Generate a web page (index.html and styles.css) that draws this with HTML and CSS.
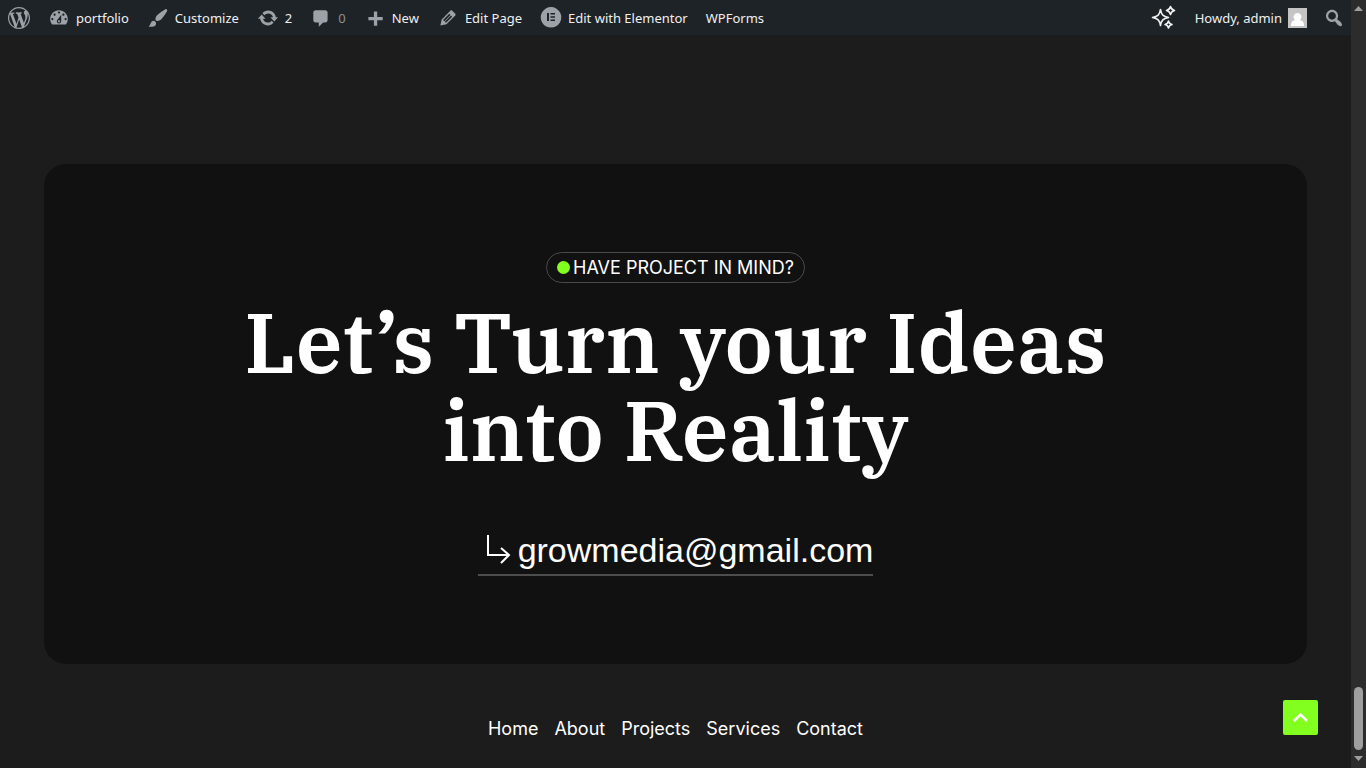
FILE: index.html
```html
<!DOCTYPE html>
<html lang="en">
<head>
  <meta charset="UTF-8">
  <meta name="viewport" content="width=device-width, initial-scale=1.0">
  <title>portfolio</title>
  <link rel="stylesheet" href="styles.css">
</head>
<body>

<div class="page">
  <header class="admin-bar">
    <nav class="bar-group" aria-label="Toolbar">
      <a class="bar-item" href="#" aria-label="About WordPress">
        <svg class="icon" viewBox="0 0 20 20"><path d="M20 10c0-5.51-4.49-10-10-10C4.48 0 0 4.49 0 10c0 5.52 4.48 10 10 10 5.51 0 10-4.48 10-10zM7.78 15.37L4.37 6.22c.55-.02 1.17-.08 1.17-.08.5-.06.44-1.13-.06-1.11 0 0-1.45.11-2.37.11-.18 0-.37 0-.58-.01C4.12 2.69 6.87 1.11 10 1.11c2.33 0 4.45.87 6.05 2.34-.68-.11-1.65.39-1.65 1.58 0 .74.45 1.36.9 2.1.35.61.55 1.36.55 2.46 0 1.49-1.4 5-1.4 5l-3.03-8.37c.54-.02.82-.17.82-.17.5-.05.44-1.25-.06-1.22 0 0-1.44.12-2.38.12-.87 0-2.33-.12-2.33-.12-.5-.03-.56 1.2-.06 1.22l.92.08 1.26 3.41zM17.41 10c.24-.64.74-1.87.43-4.25.7 1.29 1.05 2.71 1.05 4.25 0 3.29-1.73 6.24-4.4 7.78.97-2.59 1.94-5.2 2.92-7.78zM6.1 18.09C3.12 16.65 1.11 13.53 1.11 10c0-1.3.23-2.48.72-3.59C3.25 10.3 4.67 14.2 6.1 18.09zm4.03-6.63l2.58 6.98c-.86.29-1.76.45-2.71.45-.79 0-1.57-.11-2.29-.33.81-2.38 1.62-4.74 2.42-7.1z"/></svg>
      </a>
      <a class="bar-item" href="#">
        <svg class="icon" viewBox="0 0 20 20"><path fill-rule="evenodd" d="M3.76 16h12.48c1.1-1.37 1.76-3.11 1.76-5 0-4.42-3.58-8-8-8s-8 3.58-8 8c0 1.89.66 3.63 1.76 5zM10 4c.55 0 1 .45 1 1s-.45 1-1 1-1-.45-1-1 .45-1 1-1zM6 6c.55 0 1 .45 1 1s-.45 1-1 1-1-.45-1-1 .45-1 1-1zm8 0c.55 0 1 .45 1 1s-.45 1-1 1-1-.45-1-1 .45-1 1-1zm-5.37 5.55L12 7v6c0 1.1-.9 2-2 2s-2-.9-2-2c0-.57.24-1.08.63-1.45zM4 10c.55 0 1 .45 1 1s-.45 1-1 1-1-.45-1-1 .45-1 1-1zm12 0c.55 0 1 .45 1 1s-.45 1-1 1-1-.45-1-1 .45-1 1-1zm-5 3c0-.55-.45-1-1-1s-1 .45-1 1 .45 1 1 1 1-.45 1-1z"/></svg>
        <span>portfolio</span>
      </a>
      <a class="bar-item" href="#">
        <svg class="icon" viewBox="0 0 20 20"><path d="M18.33 3.57s.27-.8-.31-1.36c-.53-.52-1.22-.24-1.22-.24-.61.3-5.76 3.47-7.67 5.57-.86.96-2.06 3.79-1.09 4.82.92.98 3.96-.17 4.79-1 2.06-2.06 5.21-7.17 5.5-7.79zM1.4 17.65c2.37-1.56 1.46-3.41 3.23-4.64.93-.65 2.22-.62 3.08.29.63.67.8 2.57-.16 3.46-1.57 1.45-4 1.55-6.15.89z"/></svg>
        <span>Customize</span>
      </a>
      <a class="bar-item" href="#">
        <svg class="icon" viewBox="0 0 20 20"><path d="M10.2 3.28c3.53 0 6.43 2.61 6.92 6h2.08l-3.5 4-3.5-4h2.32c-.45-1.97-2.21-3.45-4.32-3.45-1.45 0-2.73.71-3.54 1.78L4.95 5.66C6.23 4.2 8.11 3.28 10.2 3.28zm-.4 13.44c-3.52 0-6.43-2.61-6.92-6H.8l3.5-4c1.17 1.33 2.33 2.67 3.5 4H5.48c.45 1.97 2.21 3.45 4.32 3.45 1.45 0 2.73-.71 3.54-1.78l1.71 1.95c-1.28 1.46-3.15 2.38-5.25 2.38z"/></svg>
        <span>2</span>
      </a>
      <a class="bar-item muted" href="#">
        <svg class="icon" viewBox="0 0 20 20"><path d="M5 3h9c1.100 0 2 .9 2 2v7c0 1.100-.9 2-2 2h-2l-4 4v-4H5c-1.100 0-2-.9-2-2V5c0-1.100.9-2 2-2z"/></svg>
        <span>0</span>
      </a>
      <a class="bar-item" href="#">
        <svg class="icon" viewBox="0 0 20 20"><path d="M17 9v3h-5v5H9v-5H4V9h5V4h3v5h5z"/></svg>
        <span>New</span>
      </a>
      <a class="bar-item" href="#">
        <svg class="icon" viewBox="0 0 20 20"><path d="M13.89 3.39l2.71 2.72c.46.46.42 1.24.03 1.64l-8.01 8.02-5.56 1.16 1.16-5.58s7.6-7.63 7.99-8.03c.39-.39 1.22-.39 1.68.07zm-2.73 2.79l-5.59 5.61 1.11 1.11 5.54-5.65zm-2.97 8.23l5.58-5.6-1.07-1.08-5.59 5.6z"/></svg>
        <span>Edit Page</span>
      </a>
      <a class="bar-item" href="#">
        <svg class="icon" viewBox="0 0 22 22"><path fill-rule="evenodd" d="M11 0a10.300 10.300 0 1 0 .01 0zM7 6h2v8H7zM10.500 6H15v1.600h-4.500zM10.500 9.200H15v1.600h-4.500zM10.500 12.400H15V14h-4.500z"/></svg>
        <span>Edit with Elementor</span>
      </a>
      <a class="bar-item" href="#"><span>WPForms</span></a>
    </nav>

    <div class="bar-group">
      <a class="bar-item" href="#" aria-label="AI assistant">
        <svg class="icon sparkles" viewBox="0 0 26 26"><path d="M9.500 4.500c1 5.500 2.500 7 8 8-5.500 1-7 2.500-8 8-1-5.500-2.500-7-8-8 5.500-1 7-2.500 8-8zM19.500 1.500c.6 2.700 1.300 3.400 4 4-2.700.6-3.400 1.300-4 4-.6-2.700-1.300-3.400-4-4 2.700-.6 3.400-1.300 4-4zM17.500 16c.5 2.400 1.100 3 3.500 3.500-2.400.5-3 1.100-3.500 3.500-.5-2.400-1.100-3-3.500-3.500 2.400-.5 3-1.100 3.500-3.500z"/></svg>
      </a>
      <a class="bar-item" href="#">
        <span>Howdy, admin</span>
        <svg class="avatar" viewBox="0 0 19 20"><path d="M3 18c0-4 1-5 4-6-3-3-1-7 2.500-7s5.500 4 2.500 7c3 1 4 2 4 6z"/></svg>
      </a>
      <button class="bar-item search" type="button" aria-label="Search">
        <svg class="icon" viewBox="0 0 20 20"><path d="M12.140 4.180c1.870 1.870 2.110 4.750.72 6.890.12.1.22.21.36.31.2.16.47.36.81.59.34.24.56.39.66.47.42.31.73.57.94.78.32.32.6.65.84 1 .25.35.44.69.59 1.040.14.35.21.68.18 1-.02.32-.14.59-.36.81s-.49.34-.81.36c-.31.02-.65-.04-.99-.19-.35-.14-.7-.34-1.040-.59-.35-.24-.68-.52-1-.84-.21-.21-.47-.52-.77-.93-.1-.13-.25-.35-.47-.66-.22-.32-.4-.57-.56-.78-.16-.2-.29-.35-.44-.5-2.070 1.090-4.690.76-6.440-.98-2.140-2.150-2.140-5.640 0-7.780 2.150-2.150 5.630-2.150 7.780 0zm-1.410 6.360c1.360-1.370 1.360-3.580 0-4.950-1.370-1.370-3.590-1.370-4.950 0-1.370 1.370-1.370 3.580 0 4.950 1.360 1.370 3.580 1.370 4.950 0z"/></svg>
      </button>
    </div>
  </header>

  <main class="contact">
    <section class="card">
      <p class="badge"><span class="dot"></span>HAVE PROJECT IN MIND?</p>
      <h1>Let’s Turn your Ideas<br>into Reality</h1>
      <a class="email" href="mailto:growmedia@gmail.com">
        <svg class="email-arrow" viewBox="0 0 26 30"><path d="M2 0v20h21M15 13l8 7-8 8"/></svg>
        <span>growmedia@gmail.com</span>
      </a>
    </section>
  </main>

  <footer class="footer">
    <nav class="footer-nav" aria-label="Footer">
      <a href="#">Home</a>
      <a href="#">About</a>
      <a href="#">Projects</a>
      <a href="#">Services</a>
      <a href="#">Contact</a>
    </nav>
  </footer>

  <button class="to-top" type="button" aria-label="Back to top">
    <svg viewBox="0 0 17 12"><path d="M2 9l6.500-6.500L15 9"/></svg>
  </button>
</div>

<div class="scrollbar" aria-hidden="true">
  <svg class="scroll-arrow" viewBox="0 0 9 5"><path d="M0 5l4.500-5L9 5z"/></svg>
  <div class="scroll-thumb"></div>
  <svg class="scroll-arrow" viewBox="0 0 9 5"><path d="M0 0l4.500 5L9 0z"/></svg>
</div>

</body>
</html>
```
FILE: styles.css
```css
* {
  box-sizing: border-box;
}

body {
  margin: 0;
  min-height: 100vh;
  display: flex;
  background-color: #1c1c1c;
  color: #fff;
  font-family: Inter, sans-serif;
  font-size: 18px;
}

a {
  color: inherit;
  text-decoration: none;
}

.page {
  flex: 1;
  min-width: 0;
}

/* admin bar */
.admin-bar {
  display: flex;
  justify-content: space-between;
  height: 35px;
  background-color: #1d2327;
  color: #f0f0f1;
  font-family: "Noto Sans", sans-serif;
  font-size: 13px;
}

.bar-group {
  display: flex;
  gap: 2px;
}

.bar-item {
  display: flex;
  align-items: center;
  gap: 6px;
  padding: 0 8px;
  border: 0;
  background: none;
  cursor: pointer;
  white-space: nowrap;
}

.bar-item.search {
  padding: 0 6px;
}

.icon {
  width: 22px;
  height: 22px;
  fill: #9ca2a7;
}

.muted {
  color: #8c8f94;
}

.sparkles {
  width: 26px;
  height: 26px;
  fill: none;
  stroke: #f0f0f1;
  stroke-width: 1.6;
  stroke-linejoin: round;
}

.avatar {
  width: 19px;
  height: 20px;
  background-color: #c4c4c4;
  fill: #fff;
}

/* contact card */
.contact {
  padding: 129px 44px 0;
}

.card {
  display: flex;
  flex-direction: column;
  align-items: center;
  padding: 88px 24px;
  border-radius: 22px;
  background-color: #111;
  text-align: center;
}

.badge {
  display: flex;
  align-items: center;
  gap: 3px;
  margin: 0;
  padding: 4px 10px;
  border: 1px solid #4a4a4a;
  border-radius: 16px;
  line-height: 21px;
}

.dot {
  width: 13px;
  height: 13px;
  border-radius: 50%;
  background-color: #83ff1f;
}

h1 {
  margin: 15px 0 55px;
  font-family: "IBM Plex Serif", "DejaVu Serif Condensed", "DejaVu Serif", serif;
  font-size: 84px;
  font-weight: 600;
  line-height: 88px;
}

.email {
  display: flex;
  align-items: center;
  gap: 6px;
  padding: 0 0 3px 8px;
  border-bottom: 2px solid #4d4d4d;
  font-family: "Liberation Sans", Arial, sans-serif;
  font-size: 34px;
  line-height: 42px;
}

.email-arrow {
  width: 26px;
  height: 30px;
  fill: none;
  stroke: #fff;
  stroke-width: 2;
}

/* footer */
.footer-nav {
  display: flex;
  justify-content: center;
  gap: 16px;
  padding: 52px 24px 24px;
  line-height: 26px;
}

.to-top {
  position: fixed;
  right: 48px;
  bottom: 33px;
  display: grid;
  place-items: center;
  width: 35px;
  height: 35px;
  padding: 0;
  border: 0;
  border-radius: 2px;
  background-color: #83ff1f;
  cursor: pointer;
}

.to-top svg {
  width: 17px;
  height: 12px;
  fill: none;
  stroke: #fff;
  stroke-width: 2.5;
}

/* scroll track on the right edge */
.scrollbar {
  display: flex;
  flex-direction: column;
  align-items: center;
  gap: 6px;
  width: 15px;
  padding: 6px 0 7px;
  background-color: #2c2c2c;
}

.scroll-arrow {
  width: 9px;
  height: 5px;
  fill: #9f9f9f;
}

.scroll-thumb {
  width: 9px;
  height: 63px;
  margin-top: auto;
  border-radius: 5px;
  background-color: #9f9f9f;
}

@media (max-width: 900px) {
  .contact {
    padding: 64px 16px 0;
  }

  h1 {
    font-size: 48px;
    line-height: 52px;
  }

  .admin-bar span {
    display: none;
  }
}
```
